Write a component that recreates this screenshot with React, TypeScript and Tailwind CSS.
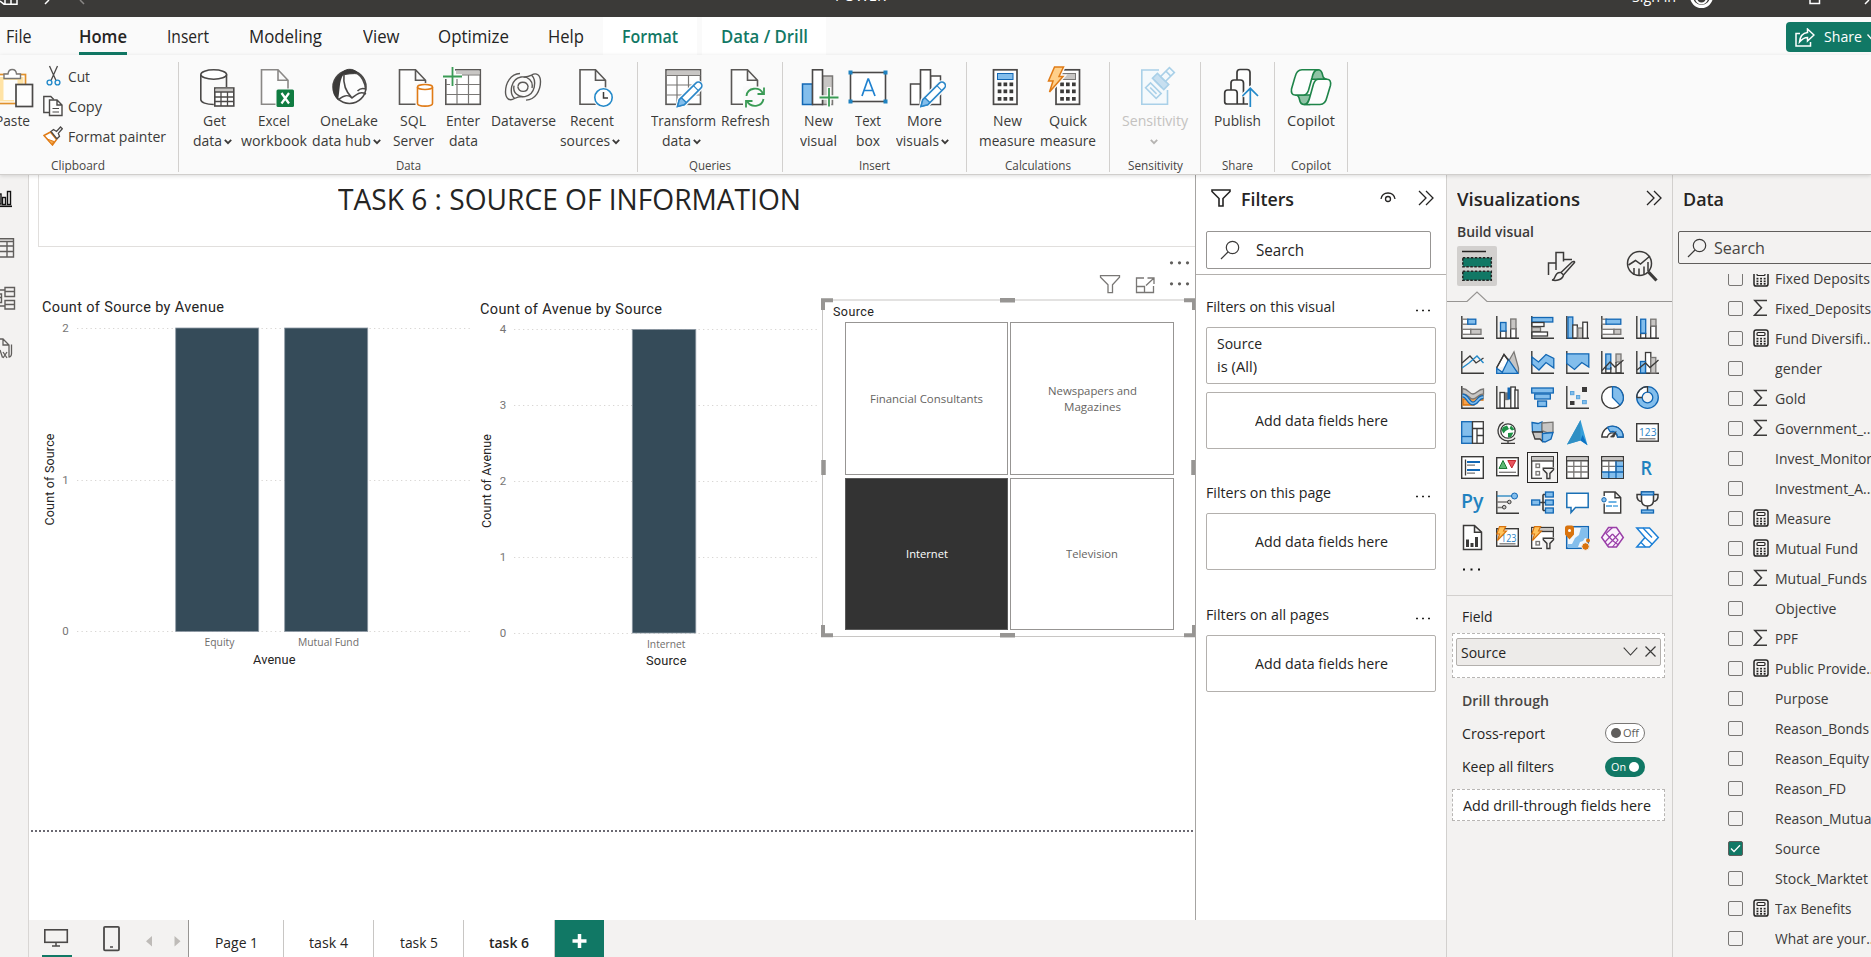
import React, { useLayoutEffect, useRef, useState } from "react";

/* Text squeezed or stretched horizontally to a known width. */
function T({ w, className = "", children }: { w: number; className?: string; children: React.ReactNode }) {
  const ref = useRef<HTMLSpanElement>(null);
  const [k, setK] = useState(1);
  useLayoutEffect(() => {
    if (ref.current && ref.current.offsetWidth) {
      const r = document.createRange();
      r.selectNodeContents(ref.current);
      ref.current.style.transform = "none";
      const n = r.getBoundingClientRect().width;
      setK(w / n);
      ref.current.style.transform = `scaleX(${w / n})`;
    }
  }, [w]);
  return (
    <span className={"inline-block shrink-0 whitespace-nowrap " + className} style={{ width: w }}>
      <span ref={ref} className="inline-block origin-left whitespace-nowrap" style={{ transform: `scaleX(${k})` }}>
        {children}
      </span>
    </span>
  );
}

const BF = "#83beec";
const BS = "#1267b4";
const DK = "#3b3a39";
const GF = "#c8c6c4";
const GS = "#797775";

type RP = { x: number; y: number; w: number; h: number; f?: string; s?: string; sw?: number };
const R = ({ x, y, w, h, f = "none", s = DK, sw = 1.3 }: RP) => (
  <rect x={x} y={y} width={w} height={h} fill={f} stroke={s} strokeWidth={sw} />
);
const P = ({ d, f = "none", s = DK, sw = 1.3 }: { d: string; f?: string; s?: string; sw?: number }) => (
  <path d={d} fill={f} stroke={s} strokeWidth={sw} />
);
const Axes = () => <P d="M.8 0V22.3H23" sw={1.4} />;
const Bolt = () => <P d="M3.5 .6h6.2L7.5 5h3L1.5 14.5 3.5 8H.8Z" f="#ffc35c" s="#d9730d" sw={1.1} />;
const FunnelMini = () => <P d="M12.3 12.2h10.2v1.6l-3.6 3.6v5.1h-3v-5.1l-3.6-3.6Z" f="#f3f2f1" sw={1.4} />;

const vizIcons: React.ReactNode[] = [
  <><Axes /><R x={1.3} y={3.2} w={5.5} h={5} f="#fff" s={GS} /><R x={6.8} y={3.2} w={8} h={5} f={BF} s={BS} /><R x={1.3} y={13.3} w={8.5} h={5} f="#fff" s={GS} /><R x={9.8} y={13.3} w={10.2} h={5} f={GF} s={GS} /></>,
  <><Axes /><R x={4.5} y={15} w={5.5} h={7} f="#fff" /><R x={4.5} y={6.5} w={5.5} h={8.5} f={BF} s={BS} /><R x={14.7} y={12.5} w={5.3} h={9.5} f="#fff" /><R x={14.7} y={3} w={5.3} h={9.8} f={GF} s={GS} /></>,
  <><Axes /><R x={1} y={1.5} w={20.8} h={4.5} f={BF} s={BS} /><R x={1} y={6.5} w={12} h={4} f="#fff" /><R x={1} y={11.5} w={8.5} h={4} f={GF} s={GS} /><R x={1} y={16} w={15.5} h={4} f="#fff" /></>,
  <><Axes /><R x={2} y={1} w={4.8} h={21} f={BF} s={BS} /><R x={6.8} y={9} w={4.5} h={13} f="#fff" /><R x={11.8} y={12} w={4.8} h={10} f={GF} s={GS} /><R x={16.8} y={6.2} w={4.6} h={16} f="#fff" /></>,
  <><Axes /><R x={1} y={3.2} w={4.6} h={5} f="#fff" s={GS} /><R x={5} y={3.2} w={14.8} h={5} f={BF} s={BS} /><R x={1} y={13.3} w={12} h={5} f="#fff" s={GS} /><R x={13} y={13.3} w={6.8} h={5} f={GF} s={GS} /></>,
  <><Axes /><R x={4.7} y={17.5} w={5} h={4.5} f="#fff" /><R x={4.7} y={3.2} w={5} h={14} f={BF} s={BS} /><R x={14.7} y={10} w={5.3} h={12} f="#fff" /><R x={14.7} y={3.2} w={5.3} h={6.8} f={GF} s={GS} /></>,
  <><Axes /><P d="M1 12 9 5l6 7 7.5-5" /><P d="M1 17l7-5 4-3.5L16 5l6.5 7" s="#2389c9" sw={1.4} /></>,
  <><P d="M.7 17 8 3.5l8 10" f="#fff" /><P d="M11 13 18 .8 22.5 17v5" f={GF} s={GS} /><P d="M.7 22.3v-5l5.6 4L12.5 8.5 22 22.3Z" f={BF} s={BS} /><P d="M.7 16.5 8 3.5l4.4 6" /></>,
  <><Axes /><P d="M1 6l6.5 5L15 3.5 22.8 7.5V17L15 11.5 8 19 1 13Z" f={BF} s={BS} /></>,
  <><Axes /><P d="M.8 2.8H22.8V16l-7-4.5L8.5 18.5.8 12.5Z" f={BF} s={BS} /></>,
  <><Axes /><R x={4.8} y={3} w={5} h={15} f={BF} s={BS} /><R x={15} y={3} w={5} h={8} f={GF} s={GS} /><P d="M4.8 16v6h5v-6M15 11v11h5V11" /><P d="M1 19.5 9 11l5 5 8.5-7" /></>,
  <><Axes /><R x={9.5} y={1.5} w={5.3} h={20.5} f="#fff" /><R x={14.8} y={6.5} w={5} h={15.5} f={GF} s={GS} /><R x={4.5} y={10.5} w={5} h={11.5} f={BF} s={BS} /><P d="M1 19l8.5-7 4.5 4.5 8.5-7.5" /></>,
  <><Axes /><P d="M2 13h7l4-4h9v5h-6l-3 5H2Z" f="#f7a14a" s="#d9730d" /><P d="M1.5 2.5C8 3 8 8 12 8S17 3 22.5 3v5C17 8 16 13 12 13S8 8 1.5 8Z" f={GF} s={GS} /><P d="M1.5 9.500C7 9.500 7 17.500 12 17.500S16 11 22.5 11" f="none" s={BS} sw={4} /><P d="M1.5 9.500C7 9.500 7 17.500 12 17.500S16 11 22.5 11" s={BF} sw={1.6} /></>,
  <><Axes /><R x={4} y={6.5} w={4.5} h={15.5} f="#fff" /><R x={9.5} y={7} w={2.5} h={6.5} f={GS} s={GS} /><R x={12} y={2} w={2.5} h={11} f={BS} s={BS} sw={1} /><R x={14.8} y={1} w={4.5} h={21} f="#fff" /><R x={19} y={4} w={3} h={18} f="#fff" /></>,
  <><R x={.7} y={2} w={21.6} h={5} f={BF} s={BS} /><R x={3.7} y={8} w={15.6} h={5} f={BF} s={BS} /><R x={6.7} y={15} w={8.8} h={5.5} f={BF} s={BS} /></>,
  <><Axes /><rect x="16" y="1" width="5" height="5" fill={DK} /><rect x="4" y="15" width="4.5" height="4" fill={DK} /><R x={4.5} y={5.5} w={3.4} h={3.2} f={BF} s="#5ba4dc" sw={1} /><R x={10.5} y={9.5} w={3.2} h={3.2} f={BF} s="#5ba4dc" sw={1} /><R x={16.5} y={14.5} w={3.8} h={3.2} f={BF} s="#5ba4dc" sw={1} /></>,
  <><circle cx="11.5" cy="11.5" r="10.8" fill="#fff" stroke={DK} strokeWidth="1.3" /><P d="M11.5 .7A10.8 10.8 0 0 1 19 19.2L11.5 11.5Z" f={BF} s={BS} /></>,
  <><circle cx="11.5" cy="11.5" r="8" fill="none" stroke={BF} strokeWidth="5.5" /><path d="M3.5 11.5A8 8 0 0 1 11.5 3.5" fill="none" stroke="#fff" strokeWidth="5.5" /><circle cx="11.5" cy="11.5" r="10.8" fill="none" stroke={BS} strokeWidth="1.3" /><circle cx="11.5" cy="11.5" r="5.3" fill="none" stroke={BS} strokeWidth="1.3" /><P d="M.7 11.5A10.8 10.8 0 0 1 11.5.7v5.5M.7 11.5h5.5" /></>,
  <><R x={.7} y={.7} w={10.8} h={21.6} f={BF} s={BS} /><P d="M.7 15.5h10.8" s={BS} /><R x={11.5} y={.7} w={10.8} h={21.6} f="#fff" /><P d="M11.5 7.5h10.8M16 7.5v14.8M16 14.5h6.3" /></>,
  <><circle cx="12" cy="10" r="7.2" fill="#fff" stroke={DK} strokeWidth="1.3" /><path d="M7 6l4-1.500 2 3.500-3.500 2-2 2.500L5.500 9ZM15 4.500l3.500 4-2.500 1-2.500-2ZM12 12l5.500-.5-2.500 4.500-3 .5Z" fill="#1e9145" /><P d="M7.500 1.200A9.800 9.800 0 0 0 12 19.800c3 0 6-1 7-3M12 19.800v2.500M5 22.300h14" /></>,
  <><P d="M1 1.500l6 1 4-1.500 0 10-9.500 0Z" f={BF} s={BS} /><P d="M11 2l11-.8v10l-6 .5-5-2Z" f={GF} s={GS} /><P d="M1.5 11h10v9.500L9 18 4 18Z" f={GF} /><P d="M11.5 12.5l10.5-1-2 6.5-6 3-2.500-.5Z" f={BF} s={BS} /></>,
  <><path d="M14.5-1 21.5 24.3 14.5 19.5 1 23.5Z" fill="#36a0da" /><path d="M14.5-1 14.5 19.5 1 23.5Z" fill="#2f8fc4" /><path d="M14.5 19.5 21.5 24.3 16.5 14Z" fill="#0c72c4" /></>,
  <><P d="M.8 16A10.7 10.7 0 0 1 22.2 16h-5.6a5.2 5.2 0 0 0-10.2 0Z" f="#fff" /><P d="M6.5 6.4A10.7 10.7 0 0 1 22.2 16h-5.6A5.2 5.2 0 0 0 9.3 11Z" f={BF} s={BS} /><P d="M9.5 16 15 10.5 13 16Z" f={DK} sw={.8} /></>,
  <><R x={.7} y={2.7} w={21.6} h={17.5} f="#fff" sw={1.4} /><text x="3" y="14.5" fontSize="11" textLength="17.5" lengthAdjust="spacingAndGlyphs" fill="#2b83c6">123</text><P d="M3.5 17.8h16" s={GS} /></>,
  <><R x={.7} y={.7} w={21.6} h={21.6} f="#fff" sw={1.4} /><P d="M4.5 3.5v16" /><P d="M6 6h13M6 14h13" s={BS} sw={2} /><P d="M6 9.2h8M6 17.2h8" s={GS} /></>,
  <><R x={.7} y={1.7} w={21.6} h={18} f="#fff" sw={1.4} /><path d="M3 12.5 7 4.5 11 12.5Z" fill="#5bb974" stroke="#1e7b36" /><path d="M11.8 4.5h8L15.8 12Z" fill="#e8555f" stroke="#c4262e" /><P d="M3 16.3h17" s={GS} /></>,
  <><R x={.7} y={.7} w={21.6} h={21.6} f="#fff" /><rect x="1" y="1" width="21" height="4" fill={GF} /><P d="M.7 5H22.3" s={DK} /><R x={5} y={8} w={3.5} h={3.5} s={GS} /><R x={5} y={15.5} w={3.5} h={3.5} s={GS} /><rect x="11" y="11" width="13" height="13" fill="#f3f2f1" /><FunnelMini /></>,
  <><R x={.7} y={.7} w={21.6} h={21.6} f="#fff" sw={1.4} /><rect x="1.4" y="1.4" width="20.2" height="3" fill={GF} /><P d="M.7 4.8H22.3" /><P d="M.7 10.3H22.3M.7 16H22.3M7.8 5V22M15 5V22" s={GS} /></>,
  <><R x={.7} y={.7} w={21.6} h={21.6} f="#fff" sw={1.4} /><rect x="1.4" y="1.4" width="20.2" height="3" fill={GF} /><rect x="15" y="5" width="7" height="17" fill={BF} /><rect x="1.4" y="16" width="20" height="6" fill={BF} /><P d="M.7 4.8H22.3" /><P d="M.7 10.3H15M7.8 5V16M15 5v11" s={GS} /><P d="M15 10.3h7M1 16H22.3M7.8 16V22M15 5V22" s={BS} /></>,
  <text x="4.500" y="18.500" fontSize="20" fontWeight="600" textLength="11.500" lengthAdjust="spacingAndGlyphs" fill="#1f82c0">R</text>,
  <text x="0" y="17" fontSize="20" fontWeight="600" textLength="22.500" lengthAdjust="spacingAndGlyphs" fill="#1f82c0">Py</text>,
  <><Axes /><P d="M1 5h15" s="#1f82c0" /><circle cx="18.5" cy="5" r="3" fill={BF} stroke={BS} /><P d="M1 11h10.5M1 16.5h6" s={GS} /><circle cx="13.3" cy="11" r="1.8" fill={GF} stroke={DK} /><circle cx="8.2" cy="16.2" r="1.8" fill={GF} stroke={DK} /></>,
  <><P d="M8 11.5h7M12 3.5v16M12 3.5h3M12 19.5h3" sw={1.6} /><R x={.7} y={9} w={8} h={5} f={BF} s={BS} /><R x={14.5} y={1} w={7.8} h={5} f={BF} s={BS} /><R x={14.5} y={9} w={7.8} h={5} f={BF} s={BS} /><R x={14.5} y={17} w={7.8} h={5} f={BF} s={BS} /></>,
  <P d="M.8 2.2H22.2V16.5H9.5L5 21.5V16.5H.8Z" f="#fff" s="#1a70b5" sw={1.5} />,
  <><P d="M3.2 5V1h11l5.5 5.5V22H3.2V12.5M14 1v5.8h5.5" f="#fff" sw={1.4} /><circle cx="3" cy="8.8" r="2.2" fill={BF} stroke={BS} /><P d="M7.5 11h8M5 15h6" s="#3f9bdc" /><P d="M12 15h5" s="#3f9bdc" /></>,
  <><P d="M5.5 1h12v8c0 4-2.500 6-6 6s-6-2-6-6Z" f="#fff" sw={1.5} /><P d="M5.5 3.5H1C.5 8 2.5 10.5 6 10.5M17.5 3.5H22c.5 4.500-1.500 7-5 7M11.5 15v4" sw={1.5} /><R x={5.5} y={.9} w={12} h={3} f={BF} s={BS} /><R x={5.5} y={19} w={12} h={3} f={BF} s={BS} /></>,
  <><P d="M2.5 -.4h11L20.5 6V23.400H2.5ZM13.5 -.4V6.200h7" f="#fff" sw={1.5} /><rect x="5" y="13.5" width="3" height="7.5" fill={DK} /><rect x="9.5" y="17" width="3" height="4" fill={DK} /><rect x="14" y="11" width="3" height="10" fill={DK} /></>,
  <><R x={.7} y={2.7} w={21.6} h={17.5} f="#fff" sw={1.4} /><text x="5" y="15.5" fontSize="11" textLength="15.5" lengthAdjust="spacingAndGlyphs" fill="#2b83c6">123</text><P d="M3.5 17.8h16" s={GS} /><Bolt /></>,
  <><R x={.7} y={1.5} w={21.6} h={20.8} f="#fff" /><rect x="1" y="2" width="21" height="3.5" fill={GF} /><P d="M.7 5.5H22.3" /><R x={5} y={15.5} w={3.5} h={3.5} s={GS} /><rect x="11" y="11" width="13" height="13" fill="#f3f2f1" /><FunnelMini /><Bolt /></>,
  <><R x={.7} y={.7} w={21.6} h={21.6} f="#f3f8fc" s={BS} sw={1.5} /><path d="M15 1.500h7V13l-3-1-2 3-3 1-2 5-3 1H2v-4h4l3-6 4-3Z" fill={BF} /><path d="M-1 1.500a2.500 2.500 0 0 1 2.500-2h4A2.500 2.500 0 0 1 8 2v6.500L3.500 13.500-1 8.500Z" fill="#d9730d" /><circle cx="3.5" cy="4.5" r="1.5" fill="#fff" /><circle cx="19.5" cy="20.5" r="3.8" fill="#d9730d" stroke="#f3f2f1" /><circle cx="22" cy="14.5" r="2" fill="#d9730d" /></>,
  <><P d="M7.500 1.500h8L22.300 11.500l-6.800 9.500h-8L.7 11.500Z" f="#fbf3fd" s="#9a3fa8" sw={1.5} /><P d="M11.500 1.500 5 7.500l6.500 7L18.500 7M11.500 8l-7.500 8M11.500 14.500l6 4.500M11.500 8l5.500 6-5.500 7M11.500 14.500 6 20" s="#9a3fa8" sw={1.2} /></>,
  <><P d="M.8 2H13.500L22.300 11.500 13.500 21H.8L9 11.500Z" f="#fff" s="#1b7fd6" sw={1.5} /><P d="M7 2l9 9.500M9 11.500l7.500 7M5 16.500l4.500 4.500" s="#1b7fd6" sw={1.3} /></>,
];

const DocShape = ({ x = 8.5, w = 26 }: { x?: number; w?: number }) => (
  <path d={`M${x} 3.7h${w - 10}l10 10.5v24H${x}ZM${x + w - 10} 3.7v10.5h10`} fill="#fdfdfd" stroke="#5a5856" strokeWidth="1.6" />
);
const Pencil = () => (
  <g transform="translate(16.5 40.5) rotate(-45)">
    <path d="M0 0 6-3.700H29a3.500 3.500 0 0 1 0 7.400H6Z" fill="#fff" stroke="#fafafa" strokeWidth="4" />
    <path d="M0 0 6-3.500H29.500a3.500 3.500 0 0 1 0 7H6Z" fill="#fff" stroke="#2a86c8" strokeWidth="1.6" />
    <path d="M0 0 6-3.500h3v7H6Z" fill="#83beec" stroke="#2a86c8" strokeWidth="1.4" />
    <path d="M26-3.500v7" stroke="#2a86c8" strokeWidth="1.2" />
  </g>
);
const Calc = ({ x, hl }: { x: number; hl: string }) => (
  <>
    <rect x={x} y="3.8" width="23.5" height="34.5" fill="#fdfdfd" stroke="#4b4948" strokeWidth="1.7" />
    <rect x={x + 4} y="7.5" width="15.5" height="6" fill={hl} stroke={hl === GF ? GS : BS} />
    {[16.5, 23.5, 31].map((y) => [4.2, 10, 16].map((d) => <rect key={y + "-" + d} x={x + d} y={y} width="3.7" height="3.7" fill={DK} />))}
  </>
);
const Swirl = () => (
  <path d="M19 7.500C9.500 8 4.500 17 4.500 26c0 6.500 4 9.500 9 6.500 2.500-1.300 5-2 8-1.800M13.500 32.500C8 27 9.500 13 20 11c7-1 12.500 4 11 11M17 20.500c.5-5.500 9-6 10.200.5" />
);

const ic: Record<string, React.ReactNode> = {
  get: (<><path d="M8.8 8.500v25c0 3 5.500 5 13 5M34.5 8.500V21" fill="none" stroke="#4b4948" strokeWidth="1.6" /><ellipse cx="21.7" cy="8.5" rx="12.9" ry="4.7" fill="#fff" stroke="#4b4948" strokeWidth="1.6" /><rect x="22.8" y="22" width="19" height="18" fill="#fff" stroke="#4b4948" strokeWidth="1.6" /><rect x="23.5" y="22.7" width="17.5" height="3" fill={GF} /><path d="M23 26h19M23 31h19M23 35.500h19M29 26v14M35.500 26v14" stroke="#4b4948" strokeWidth="1.3" /></>),
  excel: (<><path d="M9.5 3.7h16.5l10 10.5v24H9.5ZM26 3.7v10.5h10" fill="#fdfdfd" stroke="#8a8886" strokeWidth="1.6" /><rect x="23.5" y="22.5" width="19" height="19" fill="#fafafa" /><rect x="24.5" y="23.5" width="17.5" height="17.5" rx="1.5" fill="#107c41" /><path d="M29.5 27l7.500 10.500M37 27l-7.500 10.500" stroke="#fff" strokeWidth="2.2" /></>),
  onelake: (<><circle cx="22.5" cy="21" r="16.5" fill="#fdfdfd" stroke="#4b4948" strokeWidth="1.6" /><path d="M15 6.500C5 12 3 26 11 34c2-10 1-18 5-25Z" fill="#3b3a39" /><path d="M13 9.500C17 2 26 1 32 8c-5-1-13 0-19 1.500Z" fill="#3b3a39" stroke="#3b3a39" /><path d="M17 8c-1 9 2 18 8 24 5-4 8-7 14-4M30 7c4 3 8 8 8.500 16-3-1-6 0-8 2M11 34c6-5 10-6 14-2" fill="none" stroke="#4b4948" strokeWidth="1.6" /></>),
  sql: (<><DocShape /><rect x="24.5" y="17" width="19" height="25" fill="#fafafa" /><path d="M26.5 21v16.500c0 3.500 15 3.500 15 0V21" fill="#fff" stroke="#e07b16" strokeWidth="1.6" /><ellipse cx="34" cy="21" rx="7.5" ry="2.5" fill="#fff" stroke="#e07b16" strokeWidth="1.6" /></>),
  enter: (<><rect x="4.8" y="3.8" width="34.5" height="34.5" fill="#fff" stroke="#5a5856" strokeWidth="1.6" /><rect x="15" y="4.6" width="23.5" height="4" fill={GF} /><path d="M5 9h34M5 18.500h34M5 28.500h34M16 9v29M27.500 9v29" stroke="#797775" strokeWidth="1.2" /><rect x="0" y="0" width="9" height="9" fill="#fafafa" /><path d="M11.5 0v20M1.5 10.500h19.500" stroke="#fafafa" strokeWidth="5" /><path d="M11.5 1v19M2 10.500h19" stroke="#3a9b55" strokeWidth="1.8" /></>),
  dataverse: (<g fill="none" stroke="#5a5856" strokeWidth="1.4"><Swirl /><g transform="rotate(180 22 20.8)"><Swirl /></g></g>),
  recent: (<><DocShape x={10} w={25.5} /><circle cx="33.5" cy="31.5" r="10.5" fill="#fafafa" /><circle cx="33.5" cy="31.5" r="8.7" fill="#fff" stroke="#2389c9" strokeWidth="1.6" /><path d="M33.5 26v6h4.500" fill="none" stroke={DK} strokeWidth="1.5" /></>),
  transform: (<><rect x="5" y="3.8" width="34.5" height="34.5" fill="#fff" stroke="#5a5856" strokeWidth="1.6" /><rect x="5.8" y="4.6" width="33" height="4.5" fill={GF} /><path d="M5 9.500h34.500M5 19h34.500M5 29h34.500M16 9.500v29M27.500 9.500v29" stroke="#797775" strokeWidth="1.2" /><Pencil /></>),
  refresh: (<><DocShape x={8.5} w={26} /><rect x="20" y="20.5" width="23" height="22" fill="#fafafa" /><path d="M23.5 30c1-9 13-9.500 16.500-2.500M40.500 33c-1.500 8.500-13 9-16.500 2" fill="none" stroke="#3a9b55" strokeWidth="1.8" /><path d="M41 21.500V28h-6.500M23 41.500V35h6.500" fill="none" stroke="#3a9b55" strokeWidth="1.8" /></>),
  newvisual: (<><rect x="6.5" y="18" width="10" height="20.5" fill={BF} stroke={BS} strokeWidth="1.5" /><rect x="26.5" y="10" width="10" height="28.5" fill={GF} stroke={GS} strokeWidth="1.5" /><rect x="16.5" y="3.8" width="10" height="34.7" fill="#fff" stroke="#4b4948" strokeWidth="1.6" /><path d="M33 21v21M23 31.500h20" stroke="#fafafa" strokeWidth="4.5" /><path d="M33 22v18.500M23.500 31.500h19" stroke="#3a9b55" strokeWidth="1.8" /></>),
  textbox: (<><rect x="4.5" y="6.5" width="35" height="29" fill="#fff" stroke="#4b4948" strokeWidth="1.6" />{[[2.5, 4.5], [37.5, 4.5], [2.5, 33.5], [37.5, 33.5]].map(([x, y]) => <rect key={x + "_" + y} x={x} y={y} width="4" height="4" fill="#1f82c0" />)}<path d="M16 30 22 13h.5L29 30M18 24.500h9" fill="none" stroke="#1f82d0" strokeWidth="1.7" /></>),
  more: (<g transform="translate(3.5 0)"><rect x="5" y="18" width="10" height="20.5" fill="#fff" stroke="#4b4948" strokeWidth="1.5" /><rect x="25" y="10" width="10" height="28.5" fill="#fff" stroke="#4b4948" strokeWidth="1.5" /><rect x="15" y="3.8" width="10" height="34.7" fill="#fff" stroke="#4b4948" strokeWidth="1.6" /><g transform="translate(-1 0)"><Pencil /></g></g>),
  newmeasure: <Calc x={8.5} hl={BF} />,
  quick: (<><Calc x={10} hl={GF} /><path d="M8.5 1h9L13 10.500h4L3.500 26 7 15H2.500Z" fill="#ffd28a" stroke="#fafafa" strokeWidth="4" /><path d="M8.5 1h9L13 10.500h4L3.500 26 7 15H2.500Z" fill="#ffd08a" stroke="#e07b16" strokeWidth="1.5" /></>),
  sensitivity: (<g fill="#f4f9fc" stroke="#a9d0e8" strokeWidth="1.6"><path d="M26 4H8.800v34.300H34.500V24" /><g transform="translate(29 14) rotate(45)"><rect x="-8" y="-1.5" width="16" height="7" fill="#c7dff0" /><rect x="-3.5" y="-14" width="7" height="12.5" /><path d="M-3.5-9h7M-5.500 5.500h11" /></g><g transform="translate(20 25) rotate(45)"><rect x="-7.5" y="-4" width="15" height="7" /><path d="M-4.5-.5h9" /></g></g>),
  publish: (<><g fill="#fdfdfd" stroke="#3b3a39" strokeWidth="1.7"><path d="M22 38V6.500a3 3 0 0 1 3-3h7a3 3 0 0 1 3 3V38" /><path d="M16 38V17a3 3 0 0 1 3-3h6.500a3 3 0 0 1 3 3v21" /><path d="M9.7 27a3 3 0 0 1 3-3h6.500a3 3 0 0 1 3 3v11H12a2.300 2.300 0 0 1-2.300-2.300ZM22 38h13" /></g><path d="M35.3 41V23M27.5 30l7.800-7.500 7.700 7.500" fill="none" stroke="#fafafa" strokeWidth="4.5" /><path d="M35.3 41V22.500M27.5 30l7.800-7.700 7.700 7.700" fill="none" stroke="#2389c9" strokeWidth="1.7" /></>),
  copilot: (<g stroke="#1e8449" strokeWidth="1.6" fill="#fdfdfd" strokeLinejoin="round"><path d="M23 3.700h6c3 0 4 2 4.500 5 .5 3 1.500 4.500 4 4.500H22Z" fill="#8fc3a5" /><path d="M21 38.500h-6c-3 0-4-2-4.500-5-.5-3-1.500-4.500-4-4.500H22Z" fill="#8fc3a5" /><path d="M13 3.700h16c-4 0-5 4-6 8l-3.500 12.500c-1 3-2 4.800-5 4.800H6c-3 0-4-2.500-3.500-6L6 11c1-4.500 3-7.300 7-7.300Z" /><path d="M31 38.500H15c4 0 5-4 6-8L24.500 18c1-3 2-4.800 5-4.800H38c3 0 4 2.500 3.500 6L38 31c-1 4.500-3 7.500-7 7.500Z" /></g>),
};

const Chev = ({ c = "#3b3a39" }: { c?: string }) => (
  <svg width="8" height="6" viewBox="0 0 8 6" className="mt-[3px] ml-[2px] shrink-0"><path d="M.8.8 4 4.200 7.200.8" fill="none" stroke={c} strokeWidth="1.8" /></svg>
);

function Btn({ i, cls, a, aw, b, bw, chev, dim }: { i: string; cls: string; a: string; aw: number; b?: string; bw?: number; chev?: boolean; dim?: boolean }) {
  return (
    <div className={"flex shrink-0 flex-col items-center text-[15px] leading-5 " + (dim ? "text-[#c4c2c0] " : "text-[#3b3a39] ") + cls}>
      <svg width="44" height="44" viewBox="0 0 44 44" className="mt-1 shrink-0">{ic[i]}</svg>
      <T w={aw}>{a}</T>
      <div className={"flex h-5 items-center justify-center " + (chev ? "pr-[4px]" : "")}>
        {b && <T w={bw!}>{b}</T>}
        {chev && <Chev c={dim ? "#b5b3b1" : "#3b3a39"} />}
      </div>
    </div>
  );
}

function Group({ label, lw, cls, children }: { label: string; lw: number; cls: string; children: React.ReactNode }) {
  return (
    <div className={"mt-[7px] flex h-[110px] shrink-0 flex-col border-r border-[#d2d0ce] " + cls}>
      <div className="flex h-[92px] shrink-0">{children}</div>
      <div className="flex h-[18px] items-center justify-center pt-[6px] text-[12.5px] text-[#484644]"><T w={lw}>{label}</T></div>
    </div>
  );
}

const Dbl = ({ cls = "" }: { cls?: string }) => (
  <svg width="17" height="16" viewBox="0 0 17 16" className={cls}><path d="M1 1l7 7-7 7M8 1l7 7-7 7" fill="none" stroke="#252423" strokeWidth="1.3" /></svg>
);
const Mag = () => (
  <svg width="20" height="20" viewBox="0 0 20 20" className="shrink-0"><circle cx="12.5" cy="7.5" r="6.2" fill="none" stroke="#3b3a39" strokeWidth="1.2" /><path d="M8 12 1 19" stroke="#3b3a39" strokeWidth="1.2" /></svg>
);

function FilterSection({ title, tw, cls, source }: { title: string; tw: number; cls: string; source?: boolean }) {
  return (
    <div className={cls}>
      <div className="flex h-[22px] items-center justify-between pr-4">
        <T w={tw}>{title}</T>
        <svg width="14" height="3" className="mt-2"><path d="M0 1.500h2M6 1.500h2M12 1.500h2" stroke="#252423" strokeWidth="1.5" /></svg>
      </div>
      {source && (
        <div className="mt-[10px] flex h-[57px] w-[230px] flex-col rounded-[2px] border border-[#b3b0ad] pt-[4px] pl-[10px] leading-[23px]">
          <T w={45}>Source</T>
          <T w={40}>is (All)</T>
        </div>
      )}
      <div className={"flex h-[57px] w-[230px] items-center justify-center rounded-[2px] border border-[#b3b0ad] " + (source ? "mt-2" : "mt-[10px]")}>
        <T w={133}>Add data fields here</T>
      </div>
    </div>
  );
}

const fields: [string, number, string, boolean?][] = [
  ["Fixed Deposits", 95, "c"], ["Fixed_Deposits", 96, "s"], ["Fund Diversifi...", 99, "c"], ["gender", 47, ""], ["Gold", 31, "s"],
  ["Government_...", 99, "s"], ["Invest_Monitor", 97, ""], ["Investment_A...", 99, ""], ["Measure", 56, "c"], ["Mutual Fund", 83, "c"],
  ["Mutual_Funds", 92, "s"], ["Objective", 61.5, ""], ["PPF", 23, "s"], ["Public Provide...", 102, "c"], ["Purpose", 53.5, ""],
  ["Reason_Bonds", 94, ""], ["Reason_Equity", 94, ""], ["Reason_FD", 71, ""], ["Reason_Mutual", 100, ""], ["Source", 45, "", true],
  ["Stock_Marktet", 93, ""], ["Tax Benefits", 76.5, "c"], ["What are your...", 102, ""],
];

const Sigma = () => (
  <svg width="16" height="18" viewBox="0 0 16 18"><path d="M14 1.500H1.800L8.500 8.700 1.500 16.300H14" fill="none" stroke="#3b3a39" strokeWidth="1.5" /></svg>
);
const CalcMini = () => (
  <svg width="16" height="18" viewBox="0 0 16 18">
    <rect x="1" y=".9" width="14" height="16.2" rx="2.2" fill="none" stroke="#252423" strokeWidth="1.5" />
    <rect x="4" y="3.5" width="8" height="3" rx="1" fill="none" stroke="#252423" strokeWidth="1.2" />
    {[8.8, 11.5, 14].map((y) => [3.5, 7.1, 10.7].map((x) => <rect key={x + "," + y} x={x} y={y} width="1.9" height="1.7" fill="#252423" />))}
  </svg>
);

type Tick = [string, number];
function Chart({ title, tx, tw, ty, ticks, tickX, g0, g1, bars, cats, axis, ylab }: {
  title: string; tx: number; tw: number; ty: number; ticks: Tick[]; tickX: number; g0: number; g1: number;
  bars: [number, number, number, number][]; cats: [string, number, number][]; axis: [string, number, number, number]; ylab: [string, number, number, number];
}) {
  const last = ticks[ticks.length - 1][1];
  return (
    <g>
      <text x={tx} y={ty} fontSize="14.5" textLength={tw} fill="#252423">{title}</text>
      {ticks.map(([t, y]) => (
        <g key={t}>
          <text x={tickX} y={y + 4} fontSize="11.5" textAnchor="middle" fill="#777574">{t}</text>
          <path d={`M${g0} ${y + .5}H${g1}`} stroke="#d8d6d4" strokeWidth="1" strokeDasharray="1.3 3.2" />
        </g>
      ))}
      {bars.map(([x, y, w, h]) => <rect key={x} x={x} y={y} width={w} height={h} fill="#354b59" stroke="#8d98a3" strokeWidth=".8" />)}
      {cats.map(([t, x, w]) => <text key={t} x={x} y={last + 14.5} fontSize="10.8" textLength={w} lengthAdjust="spacingAndGlyphs" fill="#6f6d6b" className="font-['Open_Sans',sans-serif]">{t}</text>)}
      <text x={axis[1]} y={axis[3]} fontSize="12.8" textLength={axis[2]} fill="#252423">{axis[0]}</text>
      <text transform={`translate(${ylab[1]} ${ylab[2]}) rotate(-90)`} fontSize="12.5" textLength={ylab[3]} fill="#252423">{ylab[0]}</text>
    </g>
  );
}

const Tile = ({ on, children }: { on?: boolean; children: React.ReactNode }) => (
  <div className={"flex flex-col items-center justify-center border pt-[1px] text-[11.5px] leading-4 " + (on ? "border-[#5a5a5a] bg-[#333333] text-white" : "border-[#979593] bg-white text-[#666462]")}>{children}</div>
);

const tabs: [string, number, string][] = [
  ["File", 25.5, "ml-[6px]"], ["Home", 48, "ml-[47px]"], ["Insert", 42, "ml-10"], ["Modeling", 73, "ml-10"],
  ["View", 36.5, "ml-[41px]"], ["Optimize", 71, "ml-[39px]"], ["Help", 36, "ml-[39px]"],
];

export default function App() {
  return (
    <div className="flex h-[957px] w-[1871px] flex-col overflow-hidden bg-[#f3f2f1] font-['Open_Sans','Noto_Sans',sans-serif] text-[15px] text-[#252423]">
      {/* title bar */}
      <div className="relative h-[17px] shrink-0 overflow-hidden bg-[#3b3a38] text-[14px] leading-none text-white">
        <svg width="1871" height="17" viewBox="0 0 1871 17" className="absolute top-0 left-0" fill="none" stroke="#fff" strokeWidth="1.5">
          <path d="M0 1 4 4.200H17V0M5 0v4M11 0v4" />
          <path d="M49 0 45 4" /><path d="M80 0l4 4" stroke="#8a8886" />
          <circle cx="1701.5" cy="-3.5" r="10" fill="#3b3a38" strokeWidth="3" /><circle cx="1701.5" cy="-2" r="5.5" strokeWidth="2" />
          <path d="M1810 0v3.500h9.500V0" /><path d="M1865 4 1869 0" />
        </svg>
        <span className="absolute -top-[11px] left-[835px]"><T w={51}>POWER</T></span>
        <span className="absolute -top-[10px] left-[1632px]"><T w={44}>Sign in</T></span>
      </div>

      {/* ribbon tabs */}
      <div className="flex h-[38px] shrink-0 bg-[#fafafa] text-[17.3px]">
        {tabs.map(([t, w, m]) => (
          <div key={t} className={"relative flex h-full items-center pt-[1px] " + m}>
            <T w={w} className={t === "Home" ? "font-semibold" : ""}>{t}</T>
            {t === "Home" && <div className="absolute bottom-0 left-0 h-[3px] w-full bg-[#117865]" />}
          </div>
        ))}
        <div className="ml-[19px] flex w-[94px] items-center justify-center bg-white pt-[1px] font-semibold text-[#117865]"><T w={56}>Format</T></div>
        <div className="ml-[5px] flex w-[124px] items-center justify-center bg-white pt-[1px] font-semibold text-[#117865]"><T w={87}>Data / Drill</T></div>
        <div className="mt-[5px] ml-auto flex h-[30px] w-[85px] items-center rounded-l-[4px] bg-[#117865] pl-[9px] text-[15px] text-white">
          <svg width="20" height="19" viewBox="0 0 20 19" fill="none" stroke="#fff" strokeWidth="1.5" className="shrink-0"><path d="M5 5.500H1V18h14.500v-4" /><path d="M12.500 1 19 7l-6.500 6V9.500C9 9.500 7 11 4.500 14 5 9 7.500 5 12.500 4.500Z" /></svg>
          <T w={38} className="-mt-[2px] ml-[9px]">Share</T>
          <svg width="9" height="6" viewBox="0 0 9 6" className="ml-[5px] shrink-0"><path d="M.5.5 4.500 5l4-4.500" fill="none" stroke="#fff" strokeWidth="1.3" /></svg>
        </div>
      </div>

      {/* ribbon */}
      <div className="relative z-10 flex h-[120px] shrink-0 border-b border-[#d0cecc] bg-[#fafafa] shadow-[0_1px_4px_rgba(0,0,0,0.14)]">
        <Group label="Clipboard" lw={54} cls="-ml-[22px] w-[201px]">
          <div className="ml-[11px] flex w-[46px] shrink-0 flex-col items-center text-[15px] leading-5 text-[#3b3a39]">
            <svg width="46" height="44" viewBox="-11 0 46 44" className="mt-1 shrink-0">
              <rect x="-8" y="8.5" width="33.5" height="29" fill="#fff" stroke="#e0902b" strokeWidth="1.7" />
              <path d="M-6 11v24.500h20V19h9.500v-8Z" fill="#ffe3a6" /><rect x="3.5" y="14" width="14" height="20" fill="#fdfdfd" />
              <path d="M4 12.500V8h4c.5-6 8-6 8.500 0h4v4.500Z" fill="#fff" stroke="#797775" strokeWidth="1.4" />
              <rect x="16" y="18.5" width="16.5" height="22" fill="#fdfdfd" stroke="#4b4948" strokeWidth="1.7" />
            </svg>
            <T w={35}>Paste</T>
          </div>
          <div className="-mt-[1px] ml-[11px] flex flex-col text-[15px] text-[#3b3a39]">
            <div className="flex h-[30px] items-center">
              <svg width="16" height="22" viewBox="0 0 16 22" fill="none"><path d="M3.5 1 10 15.500M11.500 1 5 15.500" stroke="#4b4948" strokeWidth="1.3" /><circle cx="3.5" cy="17.5" r="2.4" stroke="#2389c9" strokeWidth="1.4" /><circle cx="11.5" cy="17.5" r="2.4" stroke="#2389c9" strokeWidth="1.4" /></svg>
              <T w={22} className="ml-[6px]">Cut</T>
            </div>
            <div className="flex h-[30px] items-center">
              <svg width="20" height="22" viewBox="0 0 20 22" fill="#fdfdfd" stroke="#4b4948" strokeWidth="1.4" className="-ml-[3px]"><path d="M6 17.500H.8V1.500h7l3 3" /><path d="M6.500 5H14l5 5v10.500H6.500ZM14 5v5h5" /><path d="M9.500 13.500h6.500M9.500 17h6.500" strokeWidth="1.2" /></svg>
              <T w={34} className="ml-[5px]">Copy</T>
            </div>
            <div className="flex h-[30px] items-center">
              <svg width="20" height="20" viewBox="0 0 20 20" className="-ml-[3px]"><path d="M1 9.500 7.500 6l6 7.500L9.500 19Z" fill="#fff" stroke="#e07b16" strokeWidth="1.5" /><path d="M4 13l7 2.500-2 3Z" fill="#f7a94a" stroke="#e07b16" /><path d="M8 5.500l2.500-2 3 2 4-4.500 1.800 1.800-4 4.500 1.200 3-2.500 2.500Z" fill="#fdfdfd" stroke="#4b4948" strokeWidth="1.3" /></svg>
              <T w={98} className="ml-[5px]">Format painter</T>
            </div>
          </div>
        </Group>
        <Group label="Data" lw={25} cls="w-[459px]">
          <Btn i="get" cls="ml-[13px] w-11" a="Get" aw={23} b="data" bw={29} chev />
          <Btn i="excel" cls="ml-[5px] w-[66px]" a="Excel" aw={32} b="workbook" bw={66} />
          <Btn i="onelake" cls="ml-1 w-[75px]" a="OneLake" aw={58} b="data hub" bw={59} chev />
          <Btn i="sql" cls="ml-[6px] w-[42px]" a="SQL" aw={26} b="Server" bw={41} />
          <Btn i="enter" cls="ml-[11px] w-9" a="Enter" aw={34} b="data" bw={29} />
          <Btn i="dataverse" cls="ml-[9px] w-[66px]" a="Dataverse" aw={65} />
          <Btn i="recent" cls="ml-1 w-16" a="Recent" aw={44} b="sources" bw={50} chev />
        </Group>
        <Group label="Queries" lw={42} cls="w-[145px]">
          <Btn i="transform" cls="ml-[12px] w-[66px]" a="Transform" aw={65} b="data" bw={29} chev />
          <Btn i="refresh" cls="ml-1 w-[50px]" a="Refresh" aw={49} />
        </Group>
        <Group label="Insert" lw={31} cls="w-[184px]">
          <Btn i="newvisual" cls="ml-[13px] w-11" a="New" aw={29} b="visual" bw={37} />
          <Btn i="textbox" cls="ml-[6px] w-11" a="Text" aw={26} b="box" bw={24} />
          <Btn i="more" cls="ml-[5px] w-[58px]" a="More" aw={35} b="visuals" bw={43} chev />
        </Group>
        <Group label="Calculations" lw={66} cls="w-[143px]">
          <Btn i="newmeasure" cls="ml-[11px] w-[58px]" a="New" aw={29} b="measure" bw={56} />
          <Btn i="quick" cls="ml-[3px] w-[58px]" a="Quick" aw={38} b="measure" bw={56} />
        </Group>
        <Group label="Sensitivity" lw={55} cls="w-[91px]">
          <Btn i="sensitivity" cls="ml-[11px] w-[67px]" a="Sensitivity" aw={66} chev dim />
        </Group>
        <Group label="Share" lw={31} cls="w-[74px]">
          <Btn i="publish" cls="ml-[12px] w-12" a="Publish" aw={47} />
        </Group>
        <Group label="Copilot" lw={40} cls="w-[73px]">
          <Btn i="copilot" cls="ml-[12px] w-12" a="Copilot" aw={48} />
        </Group>
      </div>

      <div className="-mt-[1px] flex h-[783px] shrink-0">
        {/* view switcher */}
        <div className="w-[29px] shrink-0 border-r border-[#d8d6d4] bg-[#f3f2f1]">
          <svg width="28" height="200" viewBox="0 174 28 200" fill="none" stroke="#605e5c" strokeWidth="1.4">
            <g stroke="#111"><path d="M0 206.300H12" strokeWidth="1.6" /><rect x="-2" y="194" width="3" height="10" /><rect x="2.5" y="197.5" width="3" height="7" /><rect x="7.5" y="191.5" width="3" height="13" /></g>
            <path d="M-2 238.700H13.500V257H-2M-2 241.500H13.500M-2 246h15.500M-2 251.500h15.500M7 241.500V257" />
            <path d="M0 290h5M0 306h5M5 287.500h9.500v9H5ZM5 291.500h9.500M5 300.500h9.500v8.500H5ZM5 304.500h9.500M-3 294H1.500v8.500H-3M-3 297.500H1.500" />
            <path d="M0 339h3l6 6v12M3 339v6h6M11.500 344.500v9c0 2-1 3.500-3 3.500M0 350l2.500 7.500M3 352l4 6M7 352l-4 6" strokeWidth="1.3" />
          </svg>
        </div>

        <div className="flex w-[1417px] shrink-0 flex-col">
          <div className="flex h-[746px] shrink-0 bg-white">
            {/* report canvas */}
            <div className="relative w-[1167px] shrink-0 overflow-hidden border-r border-[#a6a4a2]">
              <div className="absolute -top-2 left-[9px] flex h-[81px] w-[1170px] justify-start border border-[#e1dfdd] pt-[9px] pl-[299px] text-[29px] leading-[46px]">
                <T w={463}>TASK 6 : SOURCE OF INFORMATION</T>
              </div>
              <svg width="1166" height="746" viewBox="29 174 1166 746" className="absolute top-0 left-0 font-['Roboto',sans-serif]">
                <Chart title="Count of Source by Avenue" tx={42} tw={182} ty={312} tickX={65.5} g0={77} g1={470}
                  ticks={[["2", 328], ["1", 480], ["0", 631]]}
                  bars={[[175.7, 328, 83, 303.5], [284.7, 328, 83, 303.5]]}
                  cats={[["Equity", 204.5, 30], ["Mutual Fund", 298, 61]]}
                  axis={["Avenue", 253, 42.5, 664]} ylab={["Count of Source", 54, 525.5, 92]} />
                <Chart title="Count of Avenue by Source" tx={480} tw={182} ty={314} tickX={503} g0={514} g1={817}
                  ticks={[["4", 329], ["3", 405], ["2", 481], ["1", 557], ["0", 633]]}
                  bars={[[632.3, 329.4, 63.5, 303.6]]}
                  cats={[["Internet", 647, 38.5]]}
                  axis={["Source", 646, 40.5, 665]} ylab={["Count of Avenue", 491, 528, 94]} />
                <path d="M31 831H1195" stroke="#6b6972" strokeWidth="2" strokeDasharray="2 2" />
                <g fill="#605e5c">{[263, 284].map((y) => [1171.5, 1179.5, 1187.5].map((x) => <circle key={x + "" + y} cx={x} cy={y - .2} r="1.6" />))}</g>
                <g fill="none" stroke="#797775" strokeWidth="1.3">
                  <path d="M1100.5 275.700h19v1.500l-7 7.500v8h-4.500v-8l-7.500-7.500Z" />
                  <path d="M1144 278h-7.500v14.500h17V286M1137 286.500h7.500v6M1147.500 278h6.500v6M1146 285.500l7.500-7" />
                </g>
                <rect x="822.5" y="300" width="373" height="336.5" fill="none" stroke="#c8c6c4" />
                <text x="833" y="315.5" fontSize="12.5" textLength="41" fill="#252423">Source</text>
              </svg>
              <div className="absolute top-[148px] left-[816px] grid h-[308px] w-[329px] grid-cols-[163px_164px] grid-rows-2 gap-x-[2px] gap-y-[3px]">
                <Tile><T w={113}>Financial Consultants</T></Tile>
                <Tile><T w={89}>Newspapers and</T><T w={57}>Magazines</T></Tile>
                <Tile on><T w={42}>Internet</T></Tile>
                <Tile><T w={52}>Television</T></Tile>
              </div>
              <svg width="1166" height="500" viewBox="29 174 1166 500" className="absolute top-0 left-0" fill="none" stroke="#979593" strokeWidth="4">
                <path d="M833 300.300H823V310M1184 300.300H1194V310M833 635.300H823V625M1184 635.300H1194V625" />
                <path d="M1000 300.300h15M1000 635.300h15M823.500 460v15M1193.500 460v15" strokeWidth="4.5" />
              </svg>
            </div>

            {/* filters */}
            <div className="w-[250px] shrink-0 bg-white">
              <div className="flex h-[101px] flex-col border-b border-[#b3b0ad] pl-[10px]">
                <div className="mt-[13px] flex h-6 shrink-0 items-center pl-[5px]">
                  <svg width="20" height="18" viewBox="0 0 20 18" className="-mt-[2px]"><path d="M1 1h18v1.500l-7 7V17H8V9.500l-7-7Z" fill="none" stroke="#252423" strokeWidth="1.6" /></svg>
                  <T w={53} className="ml-[10px] text-[18px] font-semibold">Filters</T>
                  <svg width="16" height="11" viewBox="0 0 16 11" className="-mt-[4px] ml-[86px]"><path d="M1 7C2.500-1 13.500-1 15 7" fill="none" stroke="#252423" strokeWidth="1.3" /><circle cx="8" cy="7" r="2.5" fill="none" stroke="#252423" strokeWidth="1.3" /></svg>
                  <Dbl cls="-mt-[3px] ml-[22px]" />
                </div>
                <div className="mt-5 flex h-[38px] w-[225px] shrink-0 items-center rounded-[2px] border border-[#979593] pl-[13px] text-[16px]">
                  <Mag />
                  <T w={48} className="ml-4">Search</T>
                </div>
              </div>
              <div className="pl-[10px]">
                <FilterSection title="Filters on this visual" tw={129} cls="pt-5" source />
                <FilterSection title="Filters on this page" tw={125} cls="mt-8" />
                <FilterSection title="Filters on all pages" tw={123} cls="mt-[33px]" />
              </div>
            </div>
          </div>

          {/* page tabs */}
          <div className="flex h-[37px] shrink-0 bg-[#f3f2f1] text-[15px]">
            <svg width="159" height="37" viewBox="29 920 159 37" fill="none" className="shrink-0">
              <rect x="44.8" y="929.8" width="22.5" height="12.5" stroke="#4b4948" strokeWidth="1.6" /><path d="M56 942.500v3.500M52 946h8" stroke="#4b4948" strokeWidth="1.5" />
              <rect x="42" y="955" width="30" height="2" fill="#117865" />
              <rect x="104" y="926.8" width="15" height="23.5" rx="1" stroke="#4b4948" strokeWidth="1.8" /><path d="M110 947h3" stroke="#4b4948" strokeWidth="1.5" />
              <path d="M152 936v10.500L146 941.200ZM174.500 936v10.500l6-5.300Z" fill="#bebbb8" />
            </svg>
            <div className="flex w-[96px] items-center justify-center border-x border-l-[#979593] border-r-[#c8c6c4] bg-white pt-[7px]"><T w={43}>Page 1</T></div>
            <div className="flex w-[90px] items-center justify-center border-r border-[#c8c6c4] bg-white pt-[7px]"><T w={39}>task 4</T></div>
            <div className="flex w-[90px] items-center justify-center border-r border-[#c8c6c4] bg-white pt-[7px]"><T w={38}>task 5</T></div>
            <div className="flex w-[91px] items-center justify-center border-r border-[#c8c6c4] bg-white pt-[7px] font-semibold"><T w={40}>task 6</T></div>
            <div className="flex w-[49px] items-center justify-center bg-[#117865] pt-1"><svg width="15" height="14" viewBox="0 0 15 14"><path d="M7.500 0v14M.5 7h14" stroke="#fff" strokeWidth="3.5" /></svg></div>
          </div>
        </div>

        {/* visualizations */}
        <div className="flex w-[227px] shrink-0 flex-col border-x border-[#d2d0ce] bg-[#f3f2f1]">
          <div className="mt-[13px] flex h-6 items-center justify-between pr-[9px] pl-[10px]">
            <T w={123} className="text-[18px] font-semibold">Visualizations</T><Dbl cls="-mt-[2px]" />
          </div>
          <T w={77} className="mt-[8px] ml-[10px] text-[15px] leading-6 font-semibold text-[#3b3a39]">Build visual</T>
          <svg width="225" height="62" viewBox="1447 243 225 62" className="-mb-[2px] shrink-0" fill="none" stroke="#3b3a39" strokeWidth="1.5">
            <rect x="1457" y="246" width="40" height="40" rx="2" fill="#d2d0ce" stroke="none" />
            <path d="M1462 251.500h24" stroke="#252423" strokeWidth="1.5" />
            <rect x="1462.8" y="257.8" width="28.5" height="9" fill="#117865" stroke="#252423" strokeDasharray="2.5 1.5" />
            <rect x="1462.8" y="271.3" width="28.5" height="9" fill="#117865" stroke="#252423" strokeDasharray="2.5 1.5" />
            <path d="M1548.500 275v-12h7.500M1556 270v-17.500h7.500v9M1563.500 259.500h8.500" />
            <path d="M1574.500 262.500 1563.500 275l-2.500-2.500 11-10.500c1.500-1 3-.5 2.500.5ZM1561 272.500c-4-.5-5 2-6.500 5.500-.5 1.500-2 2-2.500 2 4 1 10.500 0 11.500-5" />
            <circle cx="1639.5" cy="263.5" r="12" />
            <path d="M1628.500 265l7-4.500 5 3.500 9.500-8M1634 275v-7M1639 275.500v-7M1644 274.500v-8M1648 271v-9" />
            <path d="M1648.500 272l8 8.500" strokeWidth="3.2" />
            <path d="M1447 301.500h20l10-9.500 10 9.500h185" stroke="#979593" strokeWidth="1.2" />
          </svg>
          <div className="mt-[13px] ml-[14px] grid grid-cols-[repeat(6,23px)] gap-3">
            {vizIcons.map((n, i) => (
              <div key={i} className={"h-[23px] w-[23px] " + (i === 26 ? "outline outline-offset-[3px] outline-[#252423]" : "")}>
                <svg width="23" height="23" viewBox="0 0 23 23" className="overflow-visible">{n}</svg>
              </div>
            ))}
          </div>
          <svg width="19" height="3" className="mt-[19px] ml-[15px] shrink-0"><path d="M1 1.500h2M8.500 1.500h2M16 1.500h2" stroke="#111" strokeWidth="2" /></svg>
          <div className="mt-[24px] border-t border-[#d2d0ce] pl-[5px]">
            <div className="flex h-[37px] items-center pt-[3px] pl-[10px]"><T w={30.5}>Field</T></div>
            <div className="h-[45px] w-[213px] border border-dashed border-[#b8b6b4] bg-white p-[3px] pt-1">
              <div className="flex h-7 w-[205px] items-center rounded-[2px] border border-[#b3b0ad] bg-[#edebe9] pl-1">
                <T w={45}>Source</T>
                <svg width="15" height="9" viewBox="0 0 15 9" className="-mt-[2px] ml-[117px] shrink-0"><path d="M.7.7 7.500 8l6.800-7.300" fill="none" stroke="#3b3a39" strokeWidth="1.1" /></svg>
                <svg width="11" height="11" viewBox="0 0 11 11" className="-mt-[1px] ml-[7px] shrink-0"><path d="M.5.5l10 10M10.500.5l-10 10" stroke="#3b3a39" strokeWidth="1.2" /></svg>
              </div>
            </div>
            <div className="mt-[10px] flex h-6 items-center pl-[10px] font-semibold text-[#484644]"><T w={87}>Drill through</T></div>
            <div className="mt-[9px] flex h-6 items-center justify-between pr-[27px] pl-[10px]">
              <T w={83}>Cross-report</T>
              <div className="flex h-5 w-10 items-center rounded-full border border-[#797775] bg-white pl-[5px] text-[11.5px] text-[#605e5c]"><span className="mr-[2px] h-[10px] w-[10px] rounded-full bg-[#605e5c]" /><T w={16}>Off</T></div>
            </div>
            <div className="mt-[9px] flex h-6 items-center justify-between pr-[27px] pl-[10px]">
              <T w={92}>Keep all filters</T>
              <div className="mt-[2px] flex h-5 w-10 items-center rounded-full bg-[#117865] pl-[6px] text-[11.5px] text-white"><T w={15}>On</T><span className="ml-[3px] h-[10px] w-[10px] rounded-full bg-white" /></div>
            </div>
            <div className="mt-[11px] flex h-[32px] w-[213px] items-center border border-dashed border-[#b8b6b4] bg-white pl-[10px]"><T w={188}>Add drill-through fields here</T></div>
          </div>
        </div>

        {/* data */}
        <div className="flex w-[198px] shrink-0 flex-col overflow-hidden bg-[#f3f2f1]">
          <T w={41} className="mt-[13px] ml-[10px] text-[18px] leading-6 font-semibold">Data</T>
          <div className="mt-5 ml-[5px] flex h-[33px] w-[230px] shrink-0 items-center rounded-[2px] border border-[#605e5c] pl-[8px] text-[16.5px] text-[#484644]">
            <Mag /><T w={51} className="mt-[2px] ml-[7px]">Search</T>
          </div>
          <div className="mt-[10px] flex-1 overflow-hidden text-[#3b3a39]">
            <div className="-mt-[11px]">
              {fields.map(([t, w, k, on]) => (
                <div key={t} className="flex h-[30px] items-center pl-[55px]">
                  <div className={"flex h-[15px] w-[15px] shrink-0 items-center justify-center rounded-[2px] border " + (on ? "border-[#605e5c] bg-[#117865]" : "border-[#797775]")}>
                    {on && <svg width="11" height="9" viewBox="0 0 11 9"><path d="M1 4.500 4 7.500 10 1.200" fill="none" stroke="#fff" strokeWidth="1.3" /></svg>}
                  </div>
                  <div className="mr-[6px] ml-[10px] h-[18px] w-4 shrink-0">{k === "s" ? <Sigma /> : k === "c" ? <CalcMini /> : null}</div>
                  <T w={w}>{t}</T>
                </div>
              ))}
            </div>
          </div>
        </div>
      </div>
    </div>
  );
}
